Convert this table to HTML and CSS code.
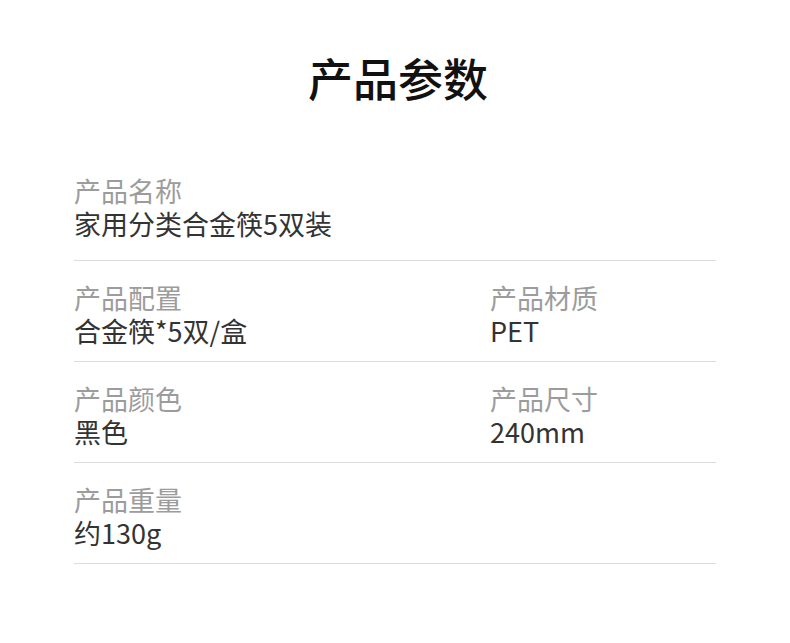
FILE: index.html
```html
<!DOCTYPE html>
<html lang="zh">
<head>
<meta charset="utf-8">
<link rel="stylesheet" href="styles.css">
</head>
<body>
<div class="page">
  <h1 class="title">产品参数</h1>
  <div class="table">
    <div class="row row-first">
      <div class="cell">
        <div class="label">产品名称</div>
        <div class="value">家用分类合金筷5双装</div>
      </div>
    </div>
    <div class="row">
      <div class="cell">
        <div class="label">产品配置</div>
        <div class="value">合金筷*5双/盒</div>
      </div>
      <div class="cell">
        <div class="label">产品材质</div>
        <div class="value">PET</div>
      </div>
    </div>
    <div class="row">
      <div class="cell">
        <div class="label">产品颜色</div>
        <div class="value">黑色</div>
      </div>
      <div class="cell">
        <div class="label">产品尺寸</div>
        <div class="value">240mm</div>
      </div>
    </div>
    <div class="row">
      <div class="cell">
        <div class="label">产品重量</div>
        <div class="value">约130g</div>
      </div>
    </div>
  </div>
</div>
</body>
</html>
```

FILE: styles.css
```css
html, body {
  margin: 0;
  padding: 0;
  background: #ffffff;
}
body {
  font-family: "Noto Sans CJK SC", "Noto Sans", sans-serif;
}
.page {
  width: 790px;
  padding-top: 48px;
}
.title {
  margin: 0;
  text-align: center;
  font-size: 45px;
  line-height: 60px;
  font-weight: 500;
  color: #111111;
  padding-left: 6px;
}
.table {
  margin: 46px 0 0 74px;
  width: 642px;
}
.row {
  display: grid;
  grid-template-columns: 416px 1fr;
  padding: 20px 0 14px;
  border-bottom: 1px solid #dcdcdc;
}
.row-first {
  padding-bottom: 20px;
}
.label {
  font-size: 27px;
  line-height: 33px;
  color: #9c9c9c;
}
.value {
  font-size: 27px;
  line-height: 33px;
  color: #333333;
}
```
